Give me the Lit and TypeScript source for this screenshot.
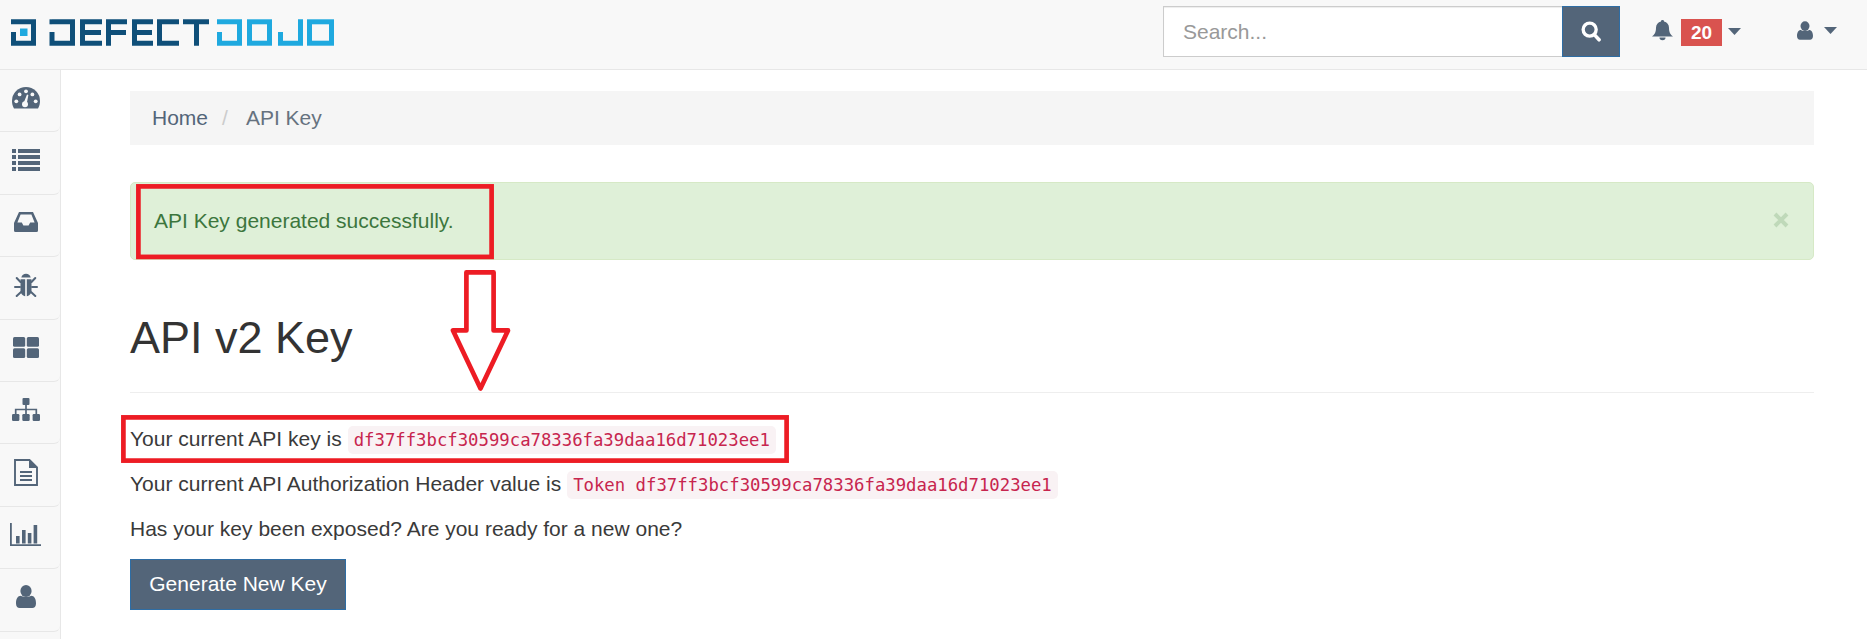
import { LitElement, html, css } from "lit";
import { customElement } from "lit/decorators.js";

const KEY = "df37ff3bcf30599ca78336fa39daa16d71023ee1";

const logo = html`<svg class="logo" width="340" height="69" viewBox="0 0 340 69" fill="none" stroke-width="5">
  <g stroke="#0f4f79">
    <path d="M11 21.8H33.5V43.2H13.5V32" />
    <path d="M52 21.8H72.5V43.2H52V32" />
    <path d="M49.5 21.8H52" />
    <path d="M102 21.8H82.5V43.2H102M82.5 32.5H101" />
    <path d="M127 21.8H108.5V45.7M108.5 32.5H126" />
    <path d="M153 21.8H134.5V43.2H153M134.5 32.5H152" />
    <path d="M179 21.8H159.5V43.2H179" />
    <path d="M183 21.8H209M196.5 21.8V45.7" />
  </g>
  <rect x="20" y="28.5" width="7.5" height="7.5" fill="#1fa9df" />
  <g stroke="#1fa9df">
    <path d="M217 21.8H239.5V43.2H219.5V32" />
    <rect x="249.5" y="21.8" width="20" height="21.4" />
    <path d="M300.5 19.3V43.2H280.5V32" />
    <rect x="309.5" y="21.8" width="22" height="21.4" />
  </g>
</svg>`;

const icons = [
  html`<svg width="28" height="22" viewBox="0 0 28 22"><path d="M2 21.5C.7 19.3 0 16.8 0 14A14 14 0 0 1 28 14C28 16.8 27.3 19.3 26 21.5Z" fill="#536579"/><g fill="#f8f8f8"><circle cx="4.3" cy="14.3" r="1.9"/><circle cx="7.6" cy="7.4" r="1.9"/><circle cx="14" cy="4.3" r="1.9"/><circle cx="20.4" cy="7.4" r="1.9"/><circle cx="23.7" cy="14.3" r="1.9"/><circle cx="13" cy="17.3" r="3"/><path d="M11.5 16.2L15 7.5 16.4 8 14.6 17.3Z"/></g></svg>`,
  html`<svg width="28" height="22" viewBox="0 0 28 22" fill="#536579"><rect y="0" width="4" height="4"/><rect x="6" y="0" width="22" height="4"/><rect y="6" width="4" height="4"/><rect x="6" y="6" width="22" height="4"/><rect y="12" width="4" height="4"/><rect x="6" y="12" width="22" height="4"/><rect y="18" width="4" height="4"/><rect x="6" y="18" width="22" height="4"/></svg>`,
  html`<svg width="24" height="20" viewBox="0 0 24 20"><path fill="#536579" fill-rule="evenodd" d="M5 0H19L24 11V18.5Q24 20 22.5 20H1.5Q0 20 0 18.5V11ZM6.6 2.4L3.4 10.4H7.8L9.4 13.6H14.6L16.2 10.4H20.6L17.4 2.4Z"/></svg>`,
  html`<svg width="24" height="25" viewBox="0 0 24 25"><g fill="#536579"><path d="M7.3 5.6A4.9 5.2 0 0 1 16.7 5.6Z"/><path d="M6.5 7.2H11.2V24.2C8.5 23.9 6.5 21.5 6.5 18.5Z"/><path d="M17.5 7.2H12.8V24.2C15.5 23.9 17.5 21.5 17.5 18.5Z"/></g><g stroke="#536579" stroke-width="2" fill="none" stroke-linecap="round"><path d="M6.5 10L2.7 6"/><path d="M17.5 10L21.3 6"/><path d="M6 15H1"/><path d="M18 15H23"/><path d="M7 20L2.7 24"/><path d="M17 20L21.3 24"/></g></svg>`,
  html`<svg width="26" height="21" viewBox="0 0 26 21" fill="#536579"><rect width="12.2" height="9.7" rx="1.5"/><rect x="13.8" width="12.2" height="9.7" rx="1.5"/><rect y="11.3" width="12.2" height="9.7" rx="1.5"/><rect x="13.8" y="11.3" width="12.2" height="9.7" rx="1.5"/></svg>`,
  html`<svg width="28" height="23" viewBox="0 0 28 23"><g fill="#536579"><rect x="10.5" width="7" height="7" rx="1"/><rect y="16" width="7.4" height="7" rx="1.2"/><rect x="10.3" y="16" width="7.4" height="7" rx="1.2"/><rect x="20.6" y="16" width="7.4" height="7" rx="1.2"/></g><path d="M14 7V16M3.7 16V11.5H24.3V16" stroke="#536579" stroke-width="1.7" fill="none"/></svg>`,
  html`<svg width="24" height="27" viewBox="0 0 24 27"><path d="M1 1H15.5L23 8.5V26H1Z" fill="none" stroke="#536579" stroke-width="1.9"/><path d="M15 1V9H23L15 1Z" fill="#536579"/><path d="M6 13H18M6 17H18M6 21H18" stroke="#536579" stroke-width="1.9"/></svg>`,
  html`<svg width="31" height="23" viewBox="0 0 31 23"><path d="M.9 0V22.1H31" fill="none" stroke="#536579" stroke-width="1.8"/><g fill="#536579"><rect x="6" y="13" width="3.6" height="7.5"/><rect x="12" y="7" width="3.6" height="13.5"/><rect x="17.8" y="10" width="3.6" height="10.5"/><rect x="23.6" y="2" width="3.6" height="18.5"/></g></svg>`,
  html`<svg width="20" height="23" viewBox="0 0 20 23" fill="#536579"><ellipse cx="10" cy="6" rx="5.6" ry="6"/><path d="M0 18.5C0 14 1.6 10.8 5 10.8 6.5 12.3 13.5 12.3 15 10.8 18.4 10.8 20 14 20 18.5 20 21.5 18.4 23 16.3 23H3.7C1.6 23 0 21.5 0 18.5Z"/></svg>`,
];

@customElement("app-root")
export class AppRoot extends LitElement {
  static styles = css`
    :host { display: block; height: 639px; overflow: hidden; position: relative; background: #fff; font-family: "Liberation Sans", Arial, sans-serif; font-size: 21px; color: #3a3a3a; }
    .top { height: 69px; background: #f8f8f8; border-bottom: 1px solid #e7e7e7; display: flex; align-items: center; }
    .logo { display: block; flex: none; }
    .search { margin-left: auto; display: flex; height: 51px; margin-top: -6px; }
    .search .input { width: 399px; box-sizing: border-box; border: 1px solid #ccc; border-right: none; background: #fff; padding-left: 19px; display: flex; align-items: center; color: #999; font-size: 21px; box-shadow: inset 0 1px 1px rgba(0,0,0,.075); }
    .search .btn { width: 58px; box-sizing: border-box; background: #536579; border: 1px solid #2e6da4; display: flex; align-items: center; justify-content: center; }
    .bell { margin-left: 32px; display: flex; align-items: center; margin-top: -4px; }
    .bell > svg:first-child { margin-top: -4px; }
    .bell .caret { margin-top: -3px; }
    .badge { margin-left: 8px; width: 41px; height: 27px; background: #d9534f; color: #fff; font-weight: 700; font-size: 19px; display: flex; align-items: center; justify-content: center; }
    .caret { display: block; margin-left: 6px; }
    .user { margin-left: 56px; margin-right: 30px; display: flex; align-items: center; margin-top: -8px; }
    .user .caret { margin-left: 11px; }
    .body { display: flex; height: 569px; }
    .side { width: 61px; flex: none; box-sizing: border-box; background: #f8f8f8; border-right: 1px solid #e7e7e7; }
    .item { height: 62.4px; box-sizing: border-box; padding: 0 9px 6px 0; border-bottom: 1px solid #e7e7e7; border-bottom-right-radius: 6px; display: flex; align-items: center; justify-content: center; }
    .item svg { display: block; }
    .main { flex: 1; min-width: 0; padding: 21px 53px 0 69px; }
    .crumbs { height: 54px; box-sizing: border-box; background: #f5f5f5; padding-left: 22px; display: flex; align-items: center; color: #536579; }
    .crumbs .sep { color: #ccc; margin: 0 18px 0 14px; }
    .crumbs .cur { color: #66727f; }
    .alert { margin-top: 37px; height: 78px; box-sizing: border-box; background: #dff0d8; border: 1px solid #d6e9c6; border-radius: 5px; color: #3c763d; padding: 0 24px 0 23px; display: flex; align-items: center; justify-content: space-between; }
    .alert svg { display: block; margin-top: -2px; }
    .head { height: 133px; box-sizing: border-box; border-bottom: 1px solid #eee; font-size: 45px; line-height: 52px; padding-top: 52px; color: #333; }
    .lines { margin-top: 23px; }
    .line { height: 45px; display: flex; align-items: center; white-space: pre; }
    .code { font-family: "DejaVu Sans Mono", monospace; font-size: 17.3px; line-height: 28px; height: 28px; padding: 0 6px; margin: 3px 0 0 6px; background: #f9f2f4; color: #c7254e; border-radius: 5px; }
    .go { margin-top: 8px; display: block; width: 216px; height: 51px; box-sizing: border-box; background: #536579; border: 1px solid #2e6da4; color: #fff; font: 21px "Liberation Sans", Arial, sans-serif; padding: 0 0 2px; }
    .marks { position: absolute; left: 0; top: 0; pointer-events: none; }
  `;

  render() {
    const caret = html`<svg class="caret" width="13" height="7" viewBox="0 0 13 7"><path d="M0 0H13L6.5 7Z" fill="#536579"/></svg>`;
    return html`
      <div class="top">
        ${logo}
        <div class="search">
          <div class="input">Search...</div>
          <div class="btn"><svg width="20" height="21" viewBox="0 0 18 19" fill="none" stroke="#fff"><circle cx="7.8" cy="7.8" r="5.9" stroke-width="3"/><path d="M12 12.3L16.3 17" stroke-width="3.2" stroke-linecap="round"/></svg></div>
        </div>
        <div class="bell">
          <svg width="21" height="21" viewBox="0 0 21 23" preserveAspectRatio="none" fill="#536579"><path d="M10.5 0A1.5 1.5 0 0 1 12 1.7C15 2.4 17 5 17 8.4 17 13.5 18.4 15.8 21 18H0C2.6 15.8 4 13.5 4 8.4 4 5 6 2.4 9 1.7A1.5 1.5 0 0 1 10.5 0Z"/><path d="M7.5 19.2H13.5A3 3 0 0 1 7.5 19.2Z"/></svg>
          <span class="badge">20</span>
          ${caret}
        </div>
        <div class="user">
          <svg width="16" height="19" viewBox="0 0 20 23" fill="#536579"><ellipse cx="10" cy="6" rx="5.6" ry="6"/><path d="M0 18.5C0 14 1.6 10.8 5 10.8 6.5 12.3 13.5 12.3 15 10.8 18.4 10.8 20 14 20 18.5 20 21.5 18.4 23 16.3 23H3.7C1.6 23 0 21.5 0 18.5Z"/></svg>
          ${caret}
        </div>
      </div>
      <div class="body">
        <div class="side">
          ${icons.map((i) => html`<div class="item">${i}</div>`)}
        </div>
        <div class="main">
          <div class="crumbs"><span>Home</span><span class="sep">/</span><span class="cur">API Key</span></div>
          <div class="alert">
            <span>API Key generated successfully.</span>
            <svg width="16" height="16" viewBox="0 0 16 16"><path d="M2 2L14 14M14 2L2 14" stroke="#bfd9b9" stroke-width="4"/></svg>
          </div>
          <div class="head">API v2 Key</div>
          <div class="lines">
            <div class="line">Your current API key is<span class="code">${KEY}</span></div>
            <div class="line">Your current API Authorization Header value is<span class="code">Token ${KEY}</span></div>
            <div class="line">Has your key been exposed? Are you ready for a new one?</div>
          </div>
          <button class="go">Generate New Key</button>
        </div>
      </div>
      <svg class="marks" width="1867" height="639" fill="none" stroke="#ed1c24" stroke-width="4.7">
        <rect x="138.4" y="186.4" width="353.2" height="70.5"/>
        <rect x="123.4" y="417.4" width="663.2" height="43.2"/>
        <path d="M466.4 272.4H493.6V330.4H508L480.5 388.5L453 330.4H466.4Z" stroke-linejoin="round"/>
      </svg>
    `;
  }
}
